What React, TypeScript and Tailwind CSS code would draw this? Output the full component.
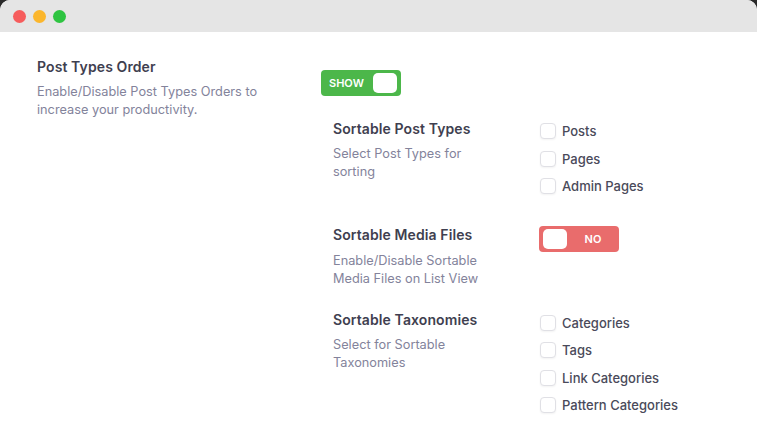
const headingClass = 'text-[14px] leading-[20px] font-semibold tracking-[0.1px] text-[#3f3f50]'
const descClass = 'text-[12.75px] leading-[18px] text-[#83839b]'

function Checks({ items, gap }: { items: string[]; gap: string }) {
    return (
        <div className={`flex flex-col ${gap}`}>
            {items.map(item => (
                <div key={item} className="flex h-4 items-center gap-[6px]">
                    <span className="size-4 rounded-[4px] border border-[#e0e0e5] bg-white shadow-xs" />
                    <span className="text-[13px] leading-4 font-medium text-[#4a4a5a]">{item}</span>
                </div>
            ))}
        </div>
    )
}

function Toggle({ on }: { on: boolean }) {
    return (
        <div
            className={`flex h-[26px] w-20 items-center rounded-[4px] px-[3px] ${
                on ? 'bg-[#4cb74a]' : 'bg-[#e96c6c]'
            }`}>
            {on ? (
                <>
                    <span className="ml-[5px] flex-1 text-[11px] font-semibold text-white">SHOW</span>
                    <span className="mr-[1px] h-5 w-6 rounded-[5px] bg-white" />
                </>
            ) : (
                <>
                    <span className="ml-[1px] h-5 w-6 rounded-[5px] bg-white" />
                    <span className="flex-1 pl-[3px] text-center text-[11px] font-semibold text-white">NO</span>
                </>
            )}
        </div>
    )
}

function Row({
    title,
    desc,
    className,
    descGap,
    children,
}: {
    title: string
    desc: string[]
    className: string
    descGap: string
    children: React.ReactNode
}) {
    return (
        <div className={`flex ${className}`}>
            <div className="w-[207px]">
                <h3 className={headingClass}>{title}</h3>
                <p className={`${descGap} ${descClass}`}>
                    {desc.map(line => (
                        <span key={line} className="block">
                            {line}
                        </span>
                    ))}
                </p>
            </div>
            {children}
        </div>
    )
}

export default function App() {
    return (
        <div className="h-[437px] w-[757px] overflow-hidden bg-[#2a2a2a] font-['Inter',sans-serif]">
            <div className="h-full overflow-hidden rounded-t-[10px] bg-white">
                <div className="flex h-8 items-center gap-[7px] bg-[#e5e5e5] px-[13px] pt-[1px]">
                    <span className="size-[13px] rounded-full bg-[#f65c5c]" />
                    <span className="size-[13px] rounded-full bg-[#fbb62c]" />
                    <span className="size-[13px] rounded-full bg-[#2ec441]" />
                </div>
                <div className="flex pt-[25px] pl-[37px]">
                    <div className="w-[284px]">
                        <h2 className={headingClass}>Post Types Order</h2>
                        <p className={`mt-[6px] ${descClass}`}>
                            <span className="block">Enable/Disable Post Types Orders to</span>
                            <span className="block">increase your productivity.</span>
                        </p>
                    </div>
                    <div className="pt-[13px]">
                        <Toggle on />
                        <div className="pt-[23px] pl-3">
                            <Row
                                title="Sortable Post Types"
                                desc={['Select Post Types for', 'sorting']}
                                descGap="mt-[6px]"
                                className="h-[97px]">
                                <div className="pt-[4px]">
                                    <Checks gap="gap-[11.5px]" items={['Posts', 'Pages', 'Admin Pages']} />
                                </div>
                            </Row>
                            <Row
                                title="Sortable Media Files"
                                desc={['Enable/Disable Sortable', 'Media Files on List View']}
                                descGap="mt-[7px]"
                                className="mt-[9px] h-[85px]">
                                <div className="-ml-[1px] mt-[1px]">
                                    <Toggle on={false} />
                                </div>
                            </Row>
                            <Row
                                title="Sortable Taxonomies"
                                desc={['Select for Sortable', 'Taxonomies']}
                                descGap="mt-[6px]"
                                className="">
                                <div className="pt-[5px]">
                                    <Checks
                                        gap="gap-[11.4px]"
                                        items={['Categories', 'Tags', 'Link Categories', 'Pattern Categories']}
                                    />
                                </div>
                            </Row>
                        </div>
                    </div>
                </div>
            </div>
        </div>
    )
}
